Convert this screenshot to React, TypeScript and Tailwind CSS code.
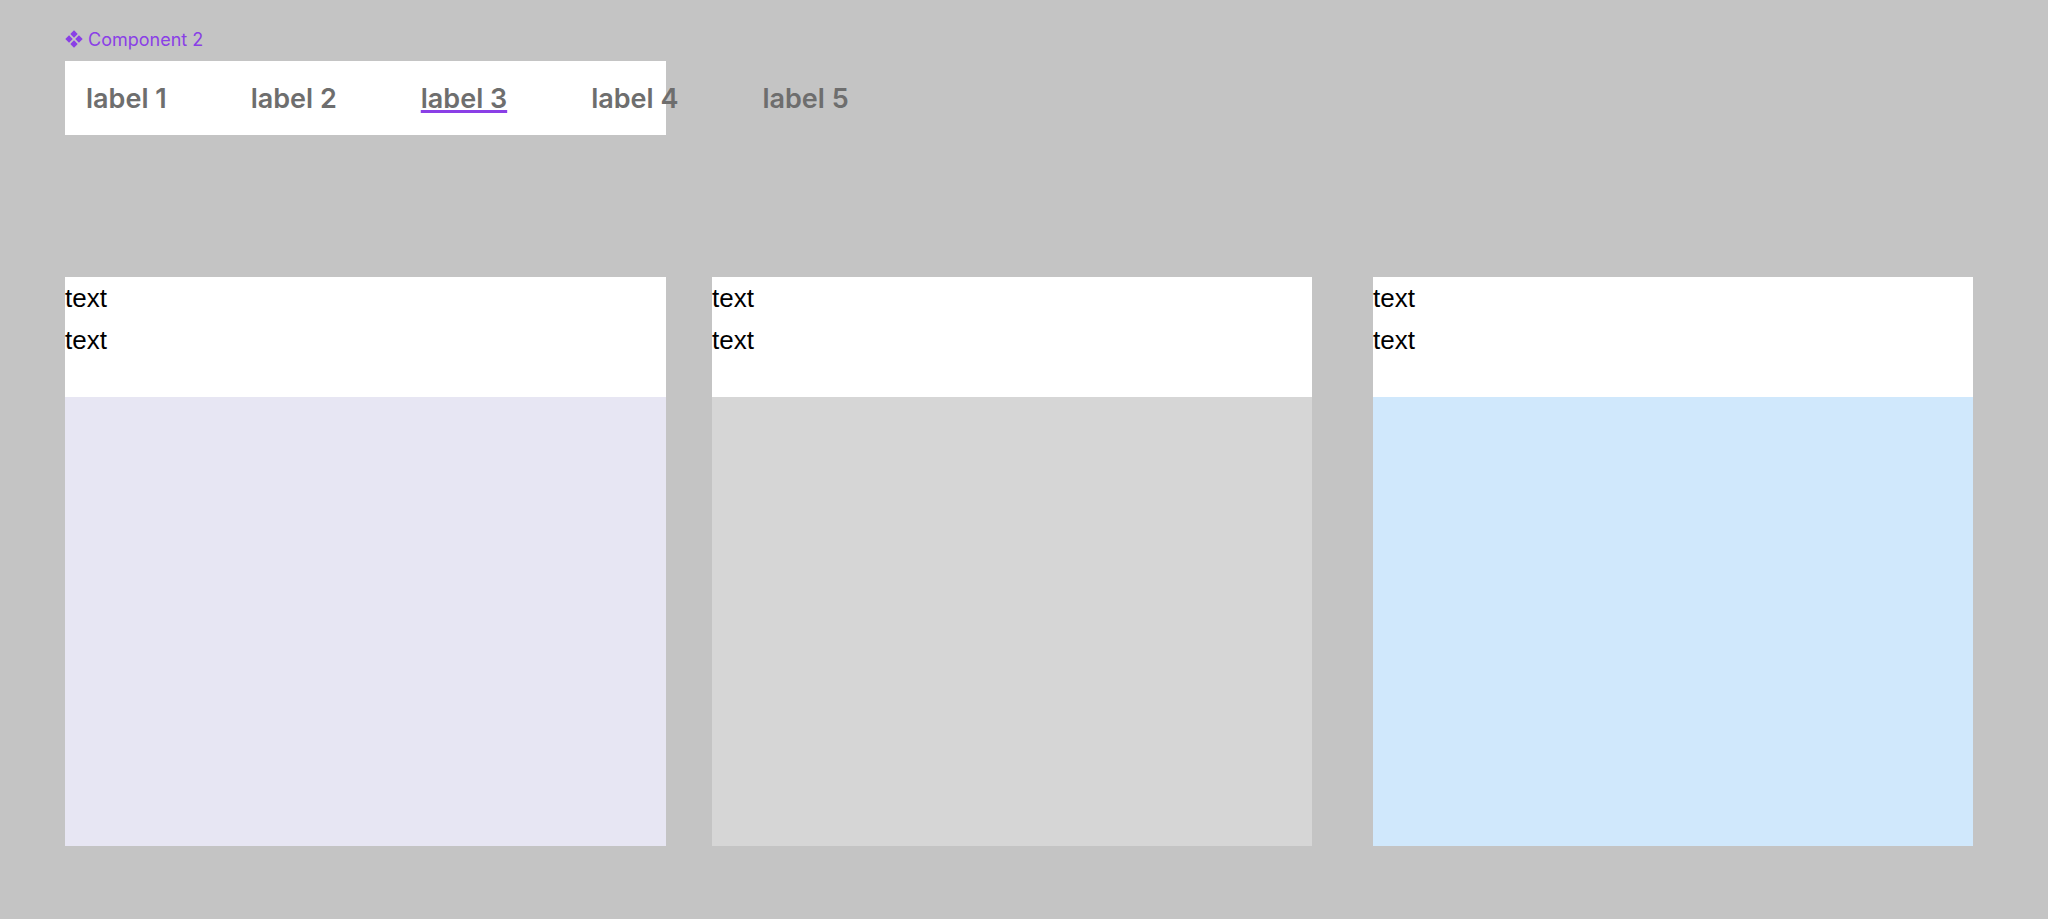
import React from "react";

const tabs = ["label 1", "label 2", "label 3", "label 4", "label 5"];

function TabBar() {
  return (
    <div className="flex items-center w-[601px] h-[74px] bg-white pl-[21px] pt-[2px] gap-[84px] whitespace-nowrap font-['Inter',sans-serif] text-[27px] font-semibold text-[#6e6e6e]">
      {tabs.map((t, i) => (
        <span
          key={t}
          className={
            i === 2
              ? "underline decoration-[#8a3fe6] decoration-[3px] underline-offset-[2px]"
              : ""
          }
        >
          {t}
        </span>
      ))}
    </div>
  );
}

function Card({ width, body }: { width: string; body: string }) {
  return (
    <div className={`flex flex-col ${width}`}>
      <div className="h-[120px] bg-white font-['Liberation_Sans',Arial,sans-serif] text-[26px] leading-[42px] text-black">
        <p>text</p>
        <p>text</p>
      </div>
      <div className={`h-[449px] ${body}`} />
    </div>
  );
}

export default function App() {
  return (
    <div className="min-h-[919px] w-full bg-[#c4c4c4] pl-[66px] pt-[27px]">
      {/* Component label */}
      <div className="-ml-[1px] flex items-center gap-[5px] h-[24px] text-[18px] text-[#8a3fe6] font-['Inter',sans-serif]">
        <svg width="18" height="18" viewBox="0 0 16 16" fill="currentColor">
          <path d="M8 0.3 L11.3 3.6 L8 6.9 L4.7 3.6 Z" />
          <path d="M8 9.1 L11.3 12.4 L8 15.7 L4.7 12.4 Z" />
          <path d="M3.6 4.7 L6.9 8 L3.6 11.3 L0.3 8 Z" />
          <path d="M12.4 4.7 L15.7 8 L12.4 11.3 L9.1 8 Z" />
        </svg>
        <span>Component 2</span>
      </div>

      <div className="-ml-[1px] mt-[10px]">
        <TabBar />
      </div>

      {/* Cards */}
      <div className="-ml-[1px] flex mt-[142px]">
        <Card width="w-[601px]" body="bg-[#e7e6f3]" />
        <div className="ml-[46px]">
          <Card width="w-[600px]" body="bg-[#d6d6d6]" />
        </div>
        <div className="ml-[61px]">
          <Card width="w-[600px]" body="bg-[#d0e8fc]" />
        </div>
      </div>
    </div>
  );
}
